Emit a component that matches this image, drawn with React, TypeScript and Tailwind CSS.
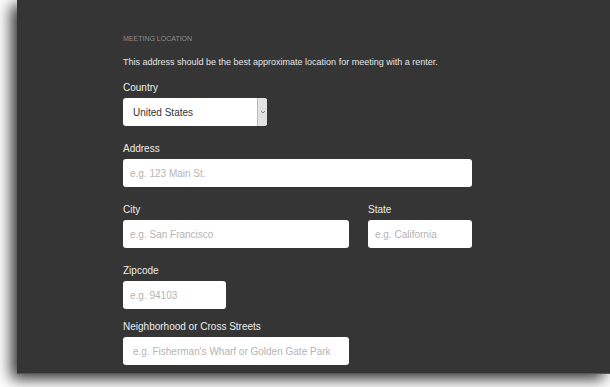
import React from 'react'

const font = { fontFamily: '"Liberation Sans", Arial, sans-serif' }

function Field({
  label,
  placeholder,
  width,
  pad = 'pl-[7px]',
}: {
  label: string
  placeholder: string
  width: string
  pad?: string
}) {
  return (
    <div className="flex flex-col">
      <label className="text-[10px] leading-[14px] text-[#ececec] mb-[3px]">{label}</label>
      <input
        placeholder={placeholder}
        className={`${width} ${pad} h-[28px] rounded-[3px] bg-white text-[10px] text-[#333] placeholder:text-[#b4b4b4] outline-none`}
      />
    </div>
  )
}

export default function App() {
  return (
    <div className="w-[610px] h-[387px] bg-white overflow-hidden pl-[17px]" style={font}>
      <div className="h-[374px] bg-[#353535] border-b border-[#565656] shadow-[-6px_5px_14px_rgba(0,0,0,0.8)] pl-[106px] pt-[34px]">
        {/* Section heading */}
        <div className="text-[7px] leading-[10px] uppercase text-[#8c8c8c]">Meeting Location</div>
        <p className="mt-[12px] text-[9px] leading-[12px] text-[#e4e4e4]">
          This address should be the best approximate location for meeting with a renter.
        </p>

        {/* Country */}
        <div className="mt-[13px] flex flex-col">
          <label className="text-[10px] leading-[14px] text-[#ececec] mb-[3px]">Country</label>
          <div className="w-[144px] h-[28px] rounded-[3px] bg-white flex overflow-hidden">
            <div className="flex-1 flex items-center pl-[10px] text-[10px] text-[#333]">United States</div>
            <div className="w-[10px] bg-[#e2e2e2] border-l border-[#bdbdbd] flex items-center justify-center">
              <svg width="6" height="4" viewBox="0 0 6 4" fill="none">
                <path d="M1 1l2 2 2-2" stroke="#777" strokeWidth="0.9" />
              </svg>
            </div>
          </div>
        </div>

        <div className="mt-[16px]">
          <Field label="Address" placeholder="e.g. 123 Main St." width="w-[349px]" />
        </div>

        <div className="mt-[16px] flex gap-[19px]">
          <Field label="City" placeholder="e.g. San Francisco" width="w-[226px]" />
          <Field label="State" placeholder="e.g. California" width="w-[104px]" />
        </div>

        <div className="mt-[16px]">
          <Field label="Zipcode" placeholder="e.g. 94103" width="w-[103px]" />
        </div>

        <div className="mt-[11px]">
          <Field
            label="Neighborhood or Cross Streets"
            placeholder="e.g. Fisherman's Wharf or Golden Gate Park"
            width="w-[226px]"
            pad="pl-[10px]"
          />
        </div>
      </div>
    </div>
  )
}
